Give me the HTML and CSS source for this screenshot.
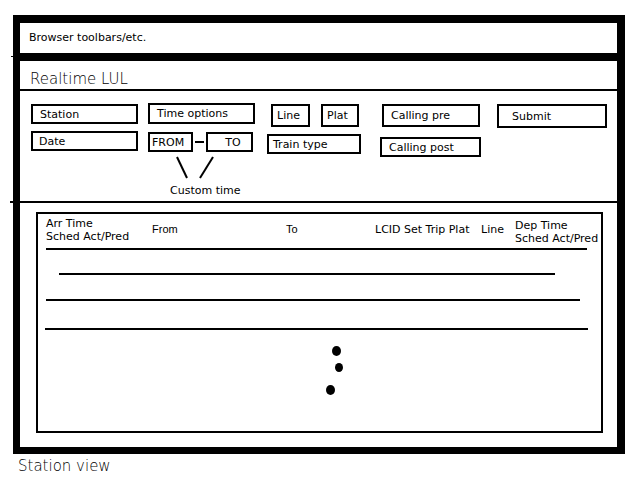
FILE: index.html
```html
<!DOCTYPE html>
<html lang="en">
<head>
  <meta charset="UTF-8" />
  <meta name="viewport" content="width=device-width, initial-scale=1.0" />
  <title>Realtime LUL - Station view</title>
  <link rel="stylesheet" href="styles.css">
</head>
<body>

  <div class="frame">
    <div class="toolbar">Browser toolbars/etc.</div>
    <div class="toolbar-rule"></div>

    <div class="app">
      <h1 class="title">Realtime LUL</h1>

      <div class="controls">
        <div class="col col-station">
          <div class="field station">Station</div>
          <div class="field date">Date</div>
        </div>

        <div class="col col-time">
          <div class="field time-options">Time options</div>
          <div class="range">
            <div class="field from">FROM</div>
            <div class="dash"></div>
            <div class="field to">TO</div>
          </div>
          <svg class="connector" width="107" height="28" viewBox="0 0 107 28">
            <line x1="29" y1="5" x2="39" y2="26" stroke="#000" stroke-width="2" />
            <line x1="65" y1="5" x2="52" y2="26" stroke="#000" stroke-width="2" />
          </svg>
          <div class="custom-label">Custom time</div>
        </div>

        <div class="col col-line">
          <div class="pair">
            <div class="field line">Line</div>
            <div class="field plat">Plat</div>
          </div>
          <div class="field train-type">Train type</div>
        </div>

        <div class="col col-calling">
          <div class="field calling-pre">Calling pre</div>
          <div class="field calling-post">Calling post</div>
        </div>

        <div class="col col-submit">
          <div class="field submit">Submit</div>
        </div>
      </div>
      <div class="controls-rule"></div>

      <div class="results">
        <div class="board">
          <div class="board-head">
            <div class="cell">Arr Time<br>Sched Act/Pred</div>
            <div class="cell mid narrow">From</div>
            <div class="cell mid narrow">To</div>
            <div class="cell mid">LCID Set Trip Plat</div>
            <div class="cell mid">Line</div>
            <div class="cell dep">Dep Time<br>Sched Act/Pred</div>
          </div>

          <div class="row-line r1"></div>
          <div class="row-line r2"></div>
          <div class="row-line r3"></div>
          <div class="row-line r4"></div>

          <div class="dot d1"></div>
          <div class="dot d2"></div>
          <div class="dot d3"></div>
        </div>
      </div>
    </div>
  </div>

  <p class="caption">Station view</p>

</body>
</html>
```

FILE: styles.css
```css
body {
  font-family: 'DejaVu Sans', 'Noto Sans', sans-serif;
  font-size: 11px;
  background: #fff;
  color: #000;
  margin: 0;
  padding: 0;
}
.frame {
  width: 612px;
  height: 439px;
  box-sizing: border-box;
  margin: 15px 0 0 13px;
  border: 8px solid #000;
  border-left-width: 7px;
  border-bottom-width: 7px;
}
.toolbar {
  height: 30px;
  line-height: 30px;
  padding-left: 9px;
}
.toolbar-rule {
  position: relative;
  height: 8px;
  background: #000;
}
/* little stray pen mark left of the frame */
.toolbar-rule::before {
  content: "";
  position: absolute;
  left: -9px;
  top: 3px;
  width: 9px;
  height: 1px;
  background: #000;
}
.title {
  margin: 0;
  height: 30px;
  box-sizing: border-box;
  padding: 8px 0 0 10px;
  line-height: 21px;
  font-size: 15px;
  font-weight: 200;
  border-bottom: 2px solid #000;
}
.controls {
  display: flex;
  height: 110px;
  box-sizing: border-box;
  padding: 13px 0 0 11px;
}
.controls-rule {
  height: 2px;
  margin-left: -10px;
  background: #000;
}
.col {
  display: flex;
  flex-direction: column;
}
.field {
  display: flex;
  align-items: center;
  box-sizing: border-box;
  border: 2px solid #000;
  height: 20px;
  padding-left: 7px;
  white-space: nowrap;
}

.col-station {
  width: 107px;
  gap: 7px;
}
.station { width: 107px; }
.date { width: 107px; padding-left: 6px; }

.col-time {
  width: 107px;
  margin-left: 10px;
  margin-top: -1px;
}
.time-options { width: 107px; height: 21px; }
.range {
  display: flex;
  align-items: center;
  margin-top: 8px;
}
.from { width: 45px; padding-left: 2px; }
.dash {
  width: 9px;
  height: 2px;
  margin: 0 2px 0 2px;
  background: #000;
}
.to { width: 47px; justify-content: center; }
.connector {
  display: block;
}
.custom-label {
  margin: 4px 0 0 22px;
  line-height: 14px;
}

.col-line {
  width: 94px;
  margin-left: 12px;
}
.pair {
  display: flex;
  margin-left: 4px;
}
.line { width: 39px; height: 23px; padding-left: 4px; }
.plat { width: 38px; height: 23px; margin-left: 11px; padding-left: 4px; }
.train-type { width: 94px; margin-top: 7px; padding-left: 4px; }

.col-calling {
  width: 101px;
  margin-left: 19px;
}
.calling-pre { width: 98px; height: 23px; margin-left: 2px; }
.calling-post { width: 101px; margin-top: 10px; }

.col-submit {
  margin-left: 16px;
}
.submit { width: 110px; height: 24px; padding-left: 13px; }

.results {
  padding: 9px 0 0 16px;
}
.board {
  width: 567px;
  height: 221px;
  box-sizing: border-box;
  border: 2px solid #000;
  padding-top: 3px;
}
.board-head {
  display: grid;
  grid-template-columns: 106px 134px 89px 106px 34px auto;
  padding-left: 8px;
  line-height: 13px;
  white-space: nowrap;
}
.cell.mid {
  align-self: center;
  margin-top: -4px;
}
.cell.narrow {
  font-family: 'Liberation Sans', 'Noto Sans', sans-serif;
}
.cell.dep {
  padding-top: 2px;
}
.row-line {
  height: 2px;
  background: #000;
}
.r1 { margin: 3px 0 0 8px; width: 541px; }
.r2 { margin: 23px 0 0 21px; width: 496px; }
.r3 { margin: 24px 0 0 8px; width: 534px; }
.r4 { margin: 27px 0 0 7px; width: 543px; }
.dot {
  border-radius: 50%;
  background: #000;
}
.d1 { width: 9px; height: 10px; margin: 16px 0 0 294px; }
.d2 { width: 8px; height: 9px; margin: 7px 0 0 297px; }
.d3 { width: 9px; height: 10px; margin: 13px 0 0 288px; }

.caption {
  margin: 4px 0 0 18px;
  font-size: 15px;
  font-weight: 200;
  line-height: 17px;
}
```
